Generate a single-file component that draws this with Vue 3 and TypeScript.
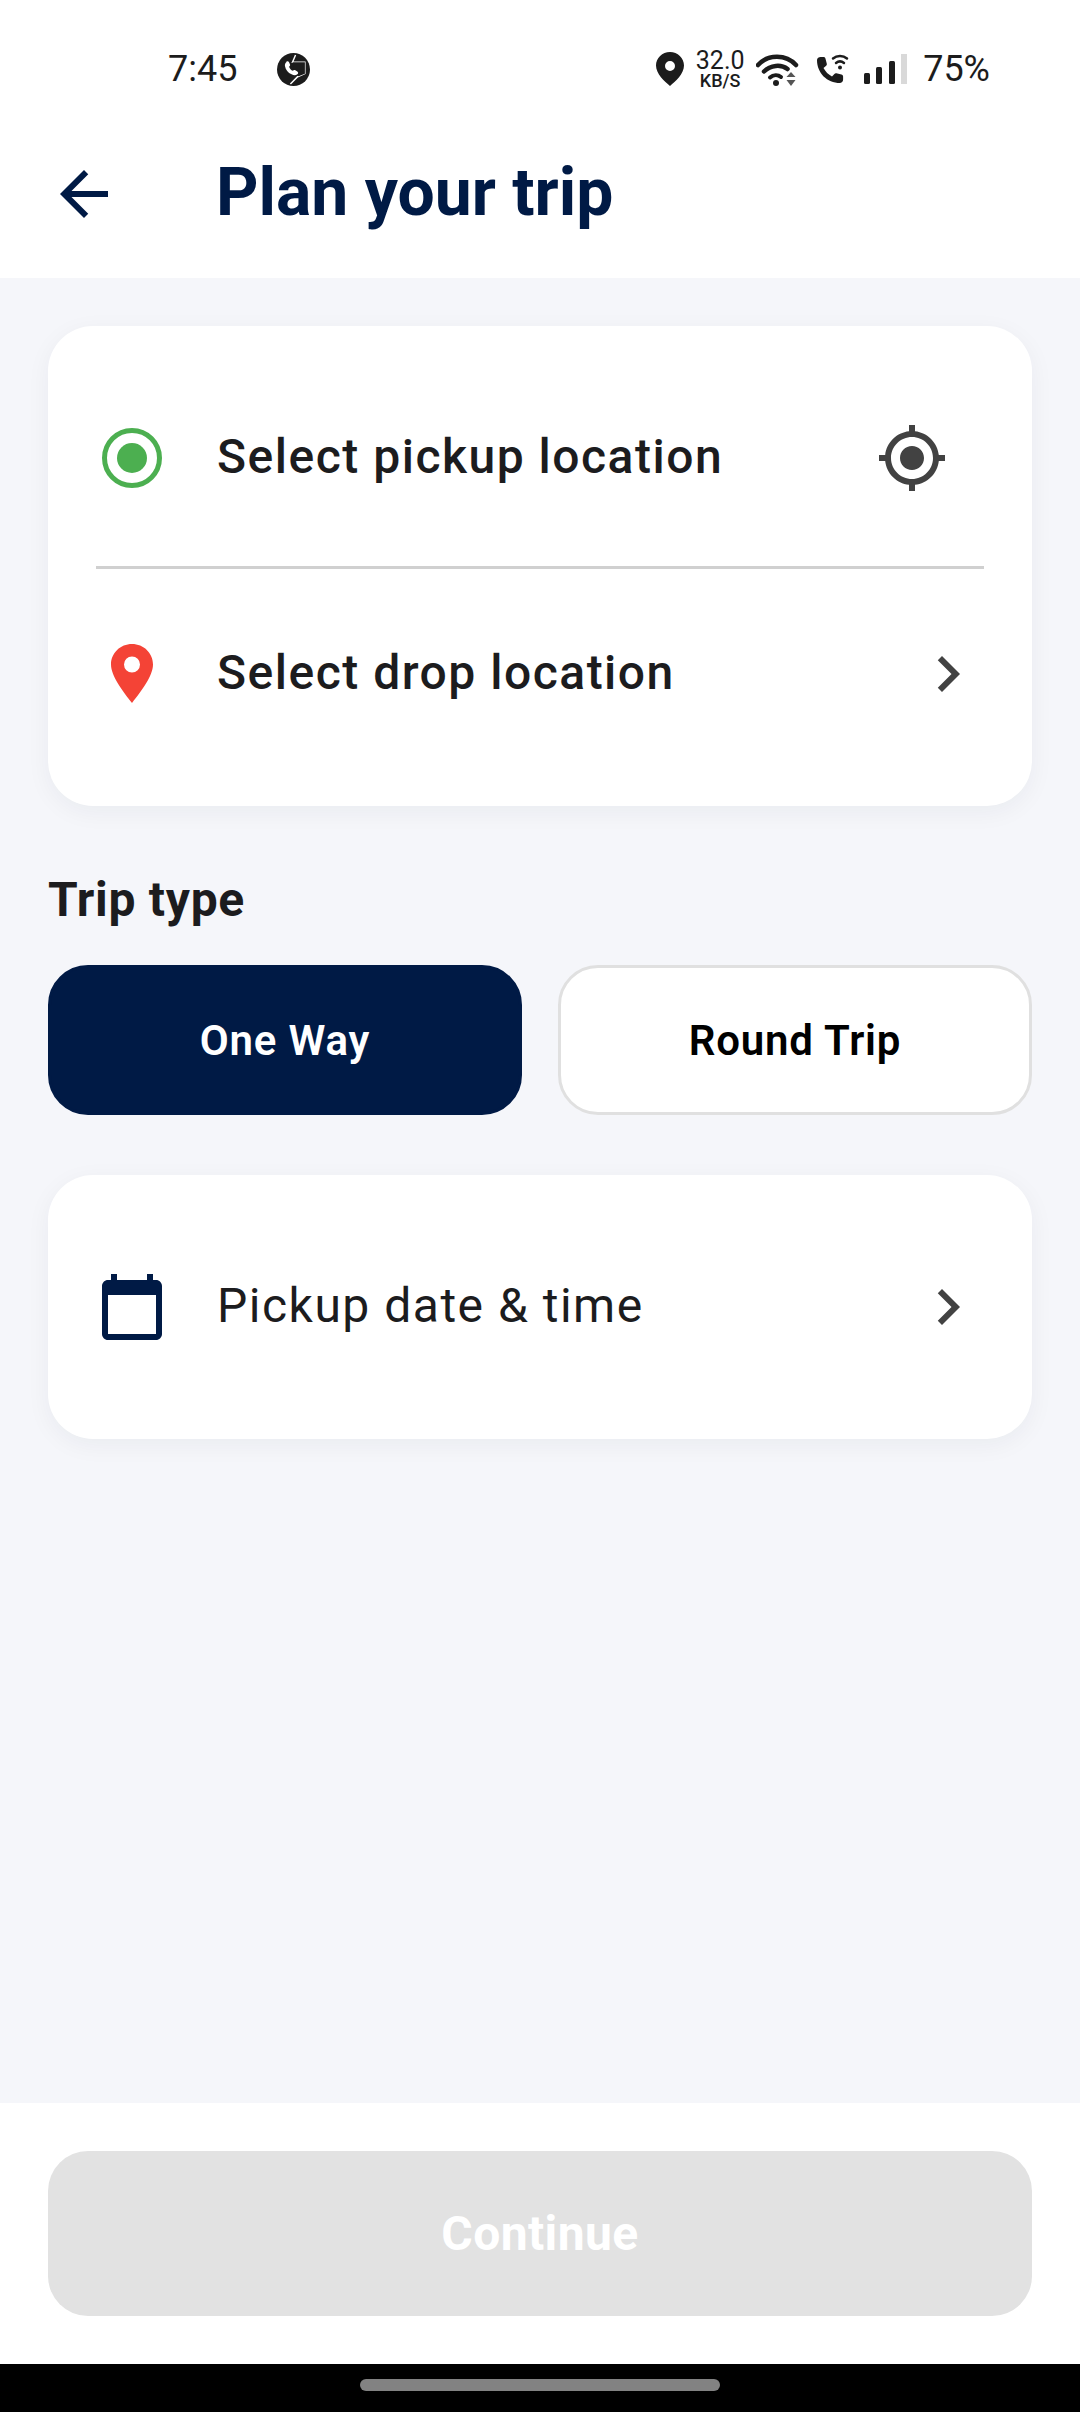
<script setup lang="ts">
const chevron = "M10 6L8.59 7.41 13.17 12l-4.58 4.59L10 18l6-6z";
</script>

<template>
  <div class="page">
    <div class="status-bar">
      <span class="time">7:45</span>
      <svg class="call-badge" viewBox="0 0 32 32" width="33" height="33">
        <circle cx="16" cy="16" r="16" fill="#1c1c1c" />
        <path d="M18 2l-3 7h12v11l-7 3-7 7" fill="none" stroke="#fff" stroke-width="1.4" />
        <path d="M15 9h12v11l-6 2.5c-1.5-.5-3-1.2-4-2.8z" fill="#1c1c1c" />
        <path d="M8.500 8.500c1.500-1 2.700-.5 3.300.8l.9 2.200c.2.700-.3 1.300-1 1.800.6 1.700 1.900 3.200 3.600 4 .7-.6 1.400-1 2.100-.7l2.300 1.300c1.100.7 1.100 1.900 0 2.800-1.600 1.300-3.500 1.100-5.600 0-3.400-1.700-5.700-4.500-6.400-8.200-.3-1.600.6-3 1.800-4z" fill="#fff" />
      </svg>
      <div class="status-right">
        <svg class="st-pin" viewBox="0 0 28 34" width="28" height="34">
          <path fill-rule="evenodd" fill="#1c1c1c" d="M14 0C6.300 0 0 6 0 13.600 0 22 8.500 29.500 14 34c5.500-4.500 14-12 14-20.400C28 6 21.700 0 14 0zm0 9a5 5 0 1 1 0 10 5 5 0 0 1 0-10z" />
        </svg>
        <div class="speed">
          <span class="speed-num">32.0</span>
          <span class="speed-unit">KB/S</span>
        </div>
        <svg class="st-wifi" viewBox="0 0 44 34" width="44" height="34">
          <path d="M2 13C12 2 30 2 40 13" fill="none" stroke="#1c1c1c" stroke-width="4.500" stroke-linecap="round" />
          <path d="M8 19.500C14.500 13 25 12 31.500 17" fill="none" stroke="#1c1c1c" stroke-width="4.500" stroke-linecap="round" />
          <path d="M14 25.500c3.500-3 8-3 11 -.5" fill="none" stroke="#1c1c1c" stroke-width="4" stroke-linecap="round" />
          <circle cx="20" cy="31" r="3" fill="#1c1c1c" />
          <path d="M35 20l4.500 5h-9z" fill="#555" />
          <path d="M35 34l4.500-6h-9z" fill="#555" />
        </svg>
        <svg class="st-call" viewBox="0 0 36 34" width="36" height="34">
          <path d="M3 8c0-2 2-3 3.500-3h3c1 0 1.800.7 2 1.700l1.300 5c.2.800 0 1.500-.6 2l-2.700 2.400c2 3.700 4.800 6.500 8.500 8.500l2.400-2.700c.5-.6 1.300-.8 2-.6l5 1.300c1 .3 1.700 1 1.700 2v3c0 1.500-1 3.400-3 3.400C13 31 3 21 3 8z" fill="#1c1c1c" />
          <path d="M19 6.500c4-3.500 10-3.500 14 0" fill="none" stroke="#1c1c1c" stroke-width="2.500" stroke-linecap="round" />
          <path d="M22 11c2.400-2 5.600-2 8 0" fill="none" stroke="#1c1c1c" stroke-width="2.500" stroke-linecap="round" />
          <circle cx="26" cy="15.500" r="2" fill="#1c1c1c" />
        </svg>
        <svg class="st-signal" viewBox="0 0 44 30" width="44" height="30">
          <rect x="0" y="19" width="6" height="11" rx="1.500" fill="#1c1c1c" />
          <rect x="12" y="13" width="6" height="17" rx="1.500" fill="#1c1c1c" />
          <rect x="25" y="7" width="6" height="23" rx="1.500" fill="#1c1c1c" />
          <rect x="37" y="0" width="6" height="30" fill="#d9d9d9" />
        </svg>
        <span class="battery">75%</span>
      </div>
    </div>

    <header class="app-bar">
      <svg class="icon back" viewBox="0 0 24 24" fill="#001a45">
        <path d="M20 11H7.830l5.590-5.590L12 4l-8 8 8 8 1.410-1.410L7.830 13H20v-2z" />
      </svg>
      <h1 class="title">Plan your trip</h1>
    </header>

    <main class="content">
      <section class="card route">
        <div class="row pickup">
          <svg class="icon" viewBox="0 0 72 72">
            <circle cx="36" cy="36" r="27.500" fill="none" stroke="#4caf50" stroke-width="5" />
            <circle cx="36" cy="36" r="15" fill="#4caf50" />
          </svg>
          <span class="row-label strong">Select pickup location</span>
          <svg class="icon locate" viewBox="0 0 24 24" fill="#424242">
            <path d="M12 8c-2.210 0-4 1.790-4 4s1.790 4 4 4 4-1.790 4-4-1.790-4-4-4zm8.940 3c-.46-4.170-3.770-7.480-7.940-7.940V1h-2v2.060C6.830 3.520 3.520 6.830 3.060 11H1v2h2.060c.46 4.170 3.770 7.480 7.940 7.940V23h2v-2.060c4.170-.46 7.480-3.770 7.940-7.940H23v-2h-2.060zM12 19c-3.870 0-7-3.130-7-7s3.130-7 7-7 7 3.130 7 7-3.130 7-7 7z" />
          </svg>
        </div>
        <div class="divider"></div>
        <div class="row drop">
          <svg class="icon" viewBox="0 0 72 72">
            <path fill-rule="evenodd" fill="#f44336" d="M36 6C24.400 6 15 15 15 26.500 15 38 27 53.500 36 65c9-11.500 21-27 21-38.500C57 15 47.600 6 36 6zm0 12.500a8 8 0 1 1 0 16 8 8 0 0 1 0-16z" />
          </svg>
          <span class="row-label strong">Select drop location</span>
          <svg class="icon" viewBox="0 0 24 24" fill="#424242"><path :d="chevron" /></svg>
        </div>
      </section>

      <h2 class="section-title">Trip type</h2>
      <div class="trip-types">
        <button class="trip active">One Way</button>
        <button class="trip">Round Trip</button>
      </div>

      <section class="card date">
        <div class="row date-row">
          <svg class="icon" viewBox="0 0 24 24" fill="#001a45">
            <path d="M20 3h-1V1h-2v2H7V1H5v2H4c-1.100 0-2 .9-2 2v16c0 1.100.9 2 2 2h16c1.100 0 2-.9 2-2V5c0-1.100-.9-2-2-2zm0 18H4V8h16v13z" />
          </svg>
          <span class="row-label">Pickup date &amp; time</span>
          <svg class="icon" viewBox="0 0 24 24" fill="#424242"><path :d="chevron" /></svg>
        </div>
      </section>
    </main>

    <footer class="footer">
      <button class="continue" disabled>Continue</button>
    </footer>

    <div class="nav-bar"><span class="nav-pill"></span></div>
  </div>
</template>

<style>
html,
body {
  margin: 0;
  background: #fff;
}
</style>

<style scoped>
.page {
  width: 1080px;
  height: 2412px;
  display: flex;
  flex-direction: column;
  font-family: Roboto, "Noto Sans", sans-serif;
  background: #fff;
  overflow: hidden;
}

.status-bar {
  height: 110px;
  box-sizing: border-box;
  padding: 28px 90px 0 168px;
  display: flex;
  align-items: center;
  color: #1c1c1c;
}
.time {
  font-size: 36px;
  width: 109px;
}
.call-badge {
  flex: none;
}
.status-right {
  margin-left: auto;
  display: flex;
  align-items: center;
}
.speed {
  margin-left: 10px;
  width: 52px;
  display: flex;
  flex-direction: column;
  align-items: center;
  gap: 3px;
  line-height: 1;
}
.speed-num {
  font-size: 25px;
  line-height: 20px;
}
.speed-unit {
  font-size: 18px;
  line-height: 13px;
  font-weight: 500;
}
.st-wifi {
  margin-left: 10px;
}
.st-call {
  margin-left: 14px;
}
.st-signal {
  margin-left: 14px;
}
.battery {
  margin-left: 15px;
  font-size: 36px;
}

.app-bar {
  height: 168px;
  flex: none;
  box-sizing: border-box;
  padding-left: 48px;
  display: flex;
  align-items: center;
}
.back {
  margin-right: 96px;
}
.title {
  margin: 0 0 3px;
  font-size: 66px;
  font-weight: 700;
  color: #001a45;
}

.icon {
  width: 72px;
  height: 72px;
  flex: none;
  display: block;
}

.content {
  flex: 1;
  box-sizing: border-box;
  padding: 48px 48px 0;
  background: #f5f6fa;
}

.card {
  background: #fff;
  border-radius: 45px;
  box-shadow: 0 6px 24px rgba(20, 30, 60, 0.05);
  padding: 0 48px;
}
.route {
  height: 480px;
  box-sizing: border-box;
  padding-top: 24px;
}
.row {
  display: flex;
  align-items: center;
  gap: 49px;
}
.pickup {
  height: 216px;
}
.drop {
  height: 210px;
}
.divider {
  height: 3px;
  background: #d0d0d0;
}
.row-label {
  flex: 1;
  margin-bottom: 3px;
  font-size: 48px;
  letter-spacing: 1.5px;
  color: #1c1c1e;
}
.row-label.strong {
  font-weight: 500;
}
.locate {
  margin-right: 36px;
}

.section-title {
  margin: 67px 0 38px;
  font-size: 48px;
  line-height: 54px;
  font-weight: 700;
  letter-spacing: 0.7px;
  color: #1c1c1e;
}
.trip-types {
  display: grid;
  grid-template-columns: 1fr 1fr;
  gap: 36px;
}
.trip {
  height: 150px;
  box-sizing: border-box;
  border: 3px solid #e0e0e0;
  border-radius: 40px;
  background: #fff;
  color: #000;
  font-family: inherit;
  font-size: 42px;
  font-weight: 600;
  letter-spacing: 0.8px;
  padding: 0;
}
.trip.active {
  background: #001a45;
  border-color: #001a45;
  color: #fff;
}

.date {
  margin-top: 60px;
  height: 264px;
  box-sizing: border-box;
  display: flex;
  align-items: center;
}
.date-row {
  flex: 1;
}

.footer {
  flex: none;
  box-sizing: border-box;
  height: 261px;
  padding: 48px;
  background: #fff;
}
.continue {
  width: 100%;
  height: 165px;
  border: none;
  border-radius: 40px;
  background: #e2e2e2;
  color: #fff;
  font-family: inherit;
  font-size: 48px;
  font-weight: 700;
  letter-spacing: 0.4px;
  padding: 0;
}

.nav-bar {
  flex: none;
  height: 48px;
  box-sizing: border-box;
  padding-top: 15px;
  background: #000;
  display: flex;
  justify-content: center;
}
.nav-pill {
  width: 360px;
  height: 12px;
  border-radius: 6px;
  background: #828282;
}
</style>
